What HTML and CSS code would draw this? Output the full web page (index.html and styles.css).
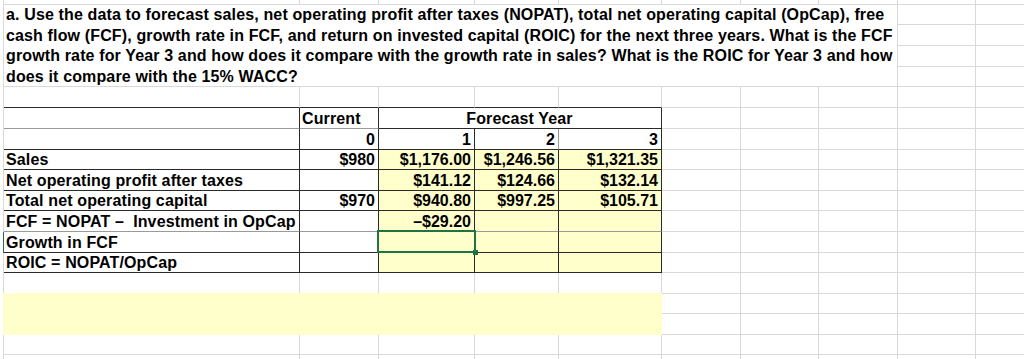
FILE: index.html
```html
<!DOCTYPE html>
<html lang="en">
<head>
<meta charset="utf-8">
<title>Forecast worksheet</title>
<link rel="stylesheet" href="styles.css">
</head>
<body>
<div class="sheet">
  <!-- row 0 (partial) -->
  <div></div><div></div><div></div><div></div><div></div><div></div><div></div><div></div><div></div><div></div>

  <!-- rows 1-4: question -->
  <div class="q">a. Use the data to forecast sales, net operating profit after taxes (NOPAT), total net operating capital (OpCap), free<br>cash flow (FCF), growth rate in FCF, and return on invested capital (ROIC) for the next three years. What is the FCF<br>growth rate for Year 3 and how does it compare with the growth rate in sales? What is the ROIC for Year 3 and how<br>does it compare with the 15% WACC?</div>
  <div></div><div></div>
  <div></div><div></div>
  <div></div><div></div>
  <div></div><div></div>

  <!-- row 5 -->
  <div class="bd"></div><div class="bd"></div><div class="bd"></div><div class="bd"></div><div class="bd"></div><div></div><div></div><div></div><div></div><div></div>

  <!-- row 6 -->
  <div class="rd bm"></div>
  <div class="rd bm">Current</div>
  <div class="merge3 rd bd ctr">Forecast Year</div>
  <div></div><div></div><div></div><div></div><div></div>

  <!-- row 7 -->
  <div class="rd bd"></div>
  <div class="rd bd num">0</div>
  <div class="rd bd num">1</div>
  <div class="rm bd num">2</div>
  <div class="rd bd num">3</div>
  <div></div><div></div><div></div><div></div><div></div>

  <!-- row 8 -->
  <div class="rd bd">Sales</div>
  <div class="rd bd num">$980</div>
  <div class="rd bd num y">$1,176.00</div>
  <div class="rd bd num y">$1,246.56</div>
  <div class="rd bd num y">$1,321.35</div>
  <div></div><div></div><div></div><div></div><div></div>

  <!-- row 9 -->
  <div class="rd bd">Net operating profit after taxes</div>
  <div class="rd bd num"></div>
  <div class="rd bd num y">$141.12</div>
  <div class="rd bd num y">$124.66</div>
  <div class="rd bd num y">$132.14</div>
  <div></div><div></div><div></div><div></div><div></div>

  <!-- row 10 -->
  <div class="rd bd">Total net operating capital</div>
  <div class="rd bd num">$970</div>
  <div class="rd bd num y">$940.80</div>
  <div class="rd bd num y">$997.25</div>
  <div class="rd bd num y">$105.71</div>
  <div></div><div></div><div></div><div></div><div></div>

  <!-- row 11 -->
  <div class="rd bm">FCF = NOPAT –&nbsp; Investment in OpCap</div>
  <div class="rd bm"></div>
  <div class="rd bm num y">–$29.20</div>
  <div class="rd bm y"></div>
  <div class="rd bm y"></div>
  <div></div><div></div><div></div><div></div><div></div>

  <!-- row 12 -->
  <div class="rd bd rowsel">Growth in FCF</div>
  <div class="rd bd"></div>
  <div class="rd bd y selcell"><span class="sel"><span class="handle"></span></span></div>
  <div class="rd bd y"></div>
  <div class="rd bd y"></div>
  <div></div><div></div><div></div><div></div><div></div>

  <!-- row 13 -->
  <div class="rd bd">ROIC = NOPAT/OpCap</div>
  <div class="rd bd"></div>
  <div class="rd bd y"></div>
  <div class="rd bd y"></div>
  <div class="rd bd y"></div>
  <div></div><div></div><div></div><div></div><div></div>

  <!-- row 14 -->
  <div></div><div></div><div></div><div></div><div></div><div></div><div></div><div></div><div></div><div></div>

  <!-- rows 15-16: answer area -->
  <div class="answer"></div>
  <div></div><div></div><div></div><div></div><div></div>
  <div></div><div></div><div></div><div></div><div></div>

  <!-- row 17 -->
  <div></div><div></div><div></div><div></div><div></div><div></div><div></div><div></div><div></div><div></div>
  <!-- row 18 -->
  <div></div><div></div><div></div><div></div><div></div><div></div><div></div><div></div><div></div><div></div>
</div>
</body>
</html>
```

FILE: styles.css
```css
* {
  box-sizing: border-box;
}

html,
body {
  margin: 0;
  padding: 0;
  background: #ffffff;
  overflow: hidden;
}

body {
  font-family: "Liberation Sans", Arial, sans-serif;
  font-weight: bold;
  font-size: 16px;
  color: #000000;
}

.sheet {
  display: grid;
  margin-left: 3px;
  border-left: 1px solid #d9d9d9;
  grid-template-columns: 296px 79px 96px 84px 103px 79px 78px 79px 78px 79px;
  grid-template-rows: 5px 20px 21px 21px 20px 21px 21px 21px 20px 21px 20px 21px 21px 20px 21px 20px 21px 20px 21px;
}

.sheet > div {
  display: flex;
  align-items: flex-end;
  padding: 0 3px 0 2px;
  line-height: 18px;
  white-space: nowrap;
  letter-spacing: 0.13px;
  border-right: 1px solid #d9d9d9;
  border-bottom: 1px solid #d9d9d9;
  min-width: 0;
}

.sheet > .q {
  display: block;
  grid-column: span 8;
  grid-row: span 4;
  padding: 0 0 0 2px;
  line-height: 20.5px;
  letter-spacing: 0.14px;
  background: #ffffff;
}

.sheet > .merge3 {
  grid-column: span 3;
}

.sheet > .rd {
  border-right-color: #2a2a2a;
}

.sheet > .rm {
  border-right-color: #9a9a9a;
}

.sheet > .bd {
  border-bottom-color: #2a2a2a;
}

.sheet > .bm {
  border-bottom-color: #9a9a9a;
}

.sheet > .num {
  justify-content: flex-end;
  letter-spacing: 0;
}

.sheet > .ctr {
  justify-content: center;
}

.sheet > .y {
  background: #ffffcc;
}

.sheet > .rowsel {
  box-shadow: -1px 0 0 #217346;
}

.sheet > .selcell {
  position: relative;
}

.sel {
  position: absolute;
  top: -2px;
  left: -2px;
  right: -2px;
  bottom: -1px;
  border: 2px solid #217346;
}

.handle {
  position: absolute;
  right: -4px;
  bottom: -4px;
  width: 5px;
  height: 5px;
  background: #217346;
}

.sheet > .answer {
  grid-column: span 5;
  grid-row: span 2;
  background: #ffffcc;
  border-right-color: #ffffcc;
  border-bottom-color: #ffffcc;
  box-shadow: 0 -1px 0 #ffffcc, -1px 0 0 #ffffcc, -1px -1px 0 #ffffcc;
}
```
